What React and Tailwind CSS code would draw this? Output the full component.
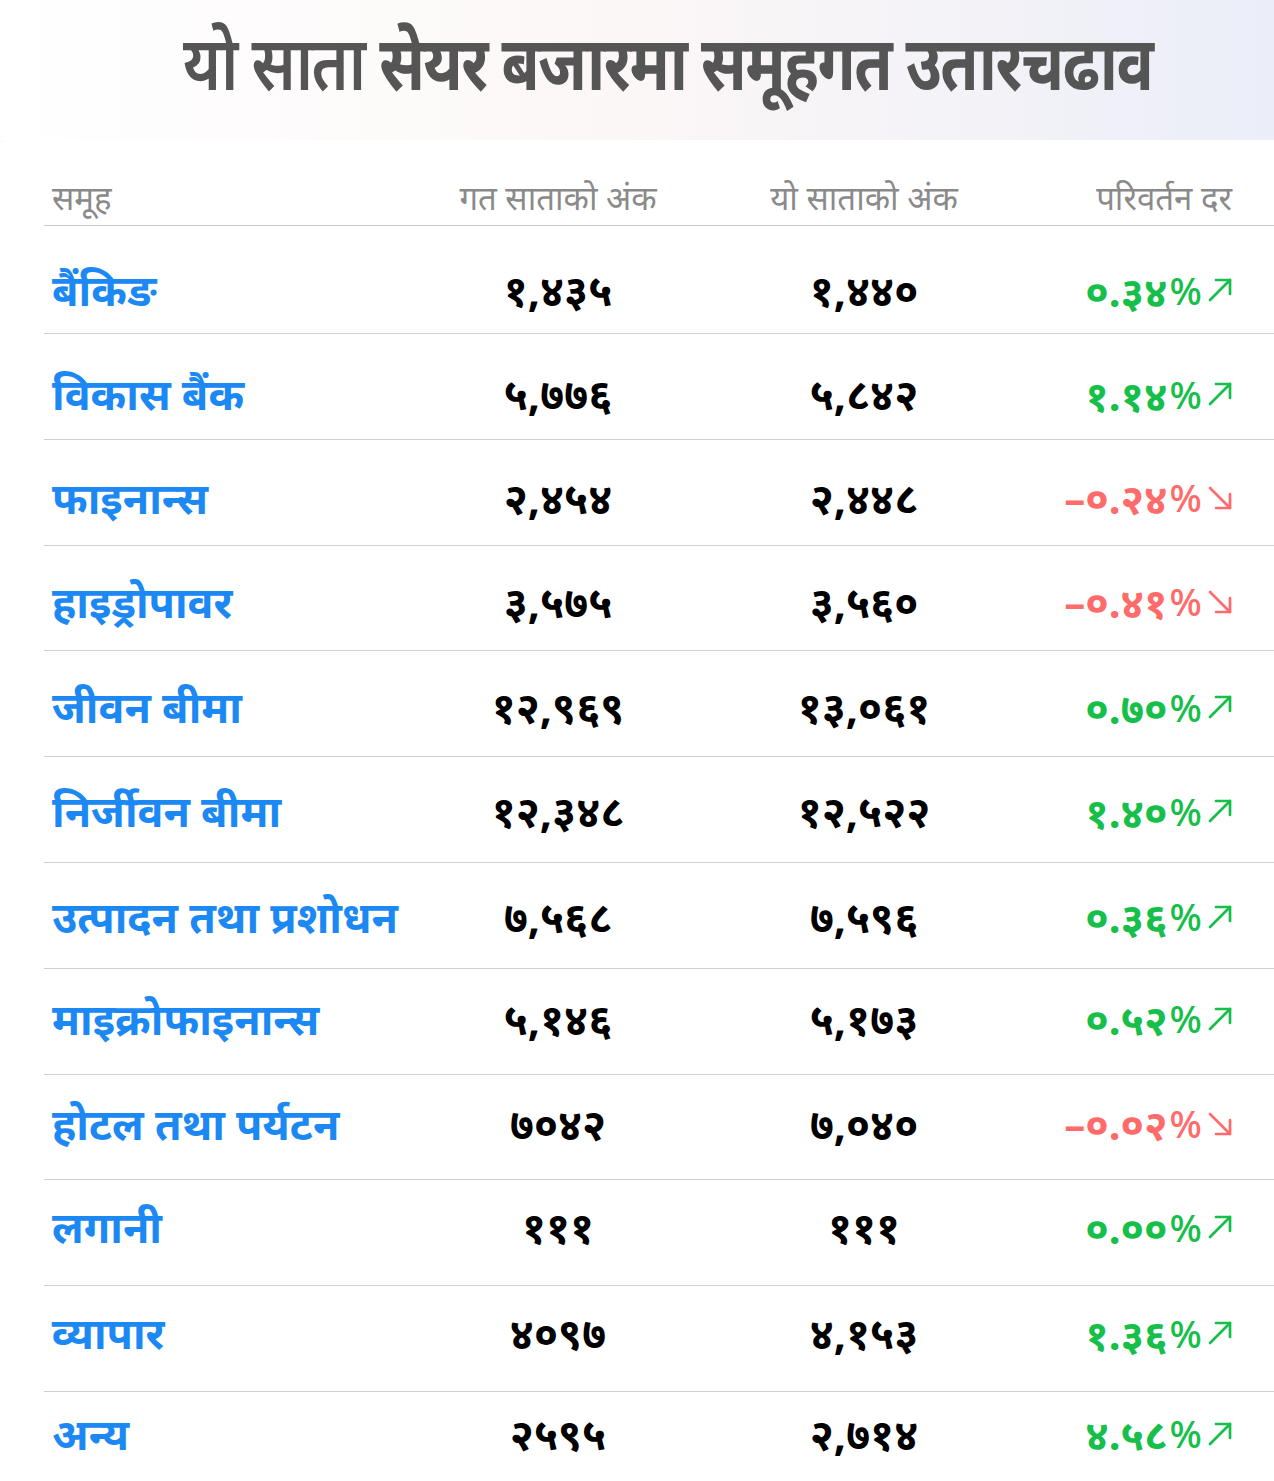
import React from "react";

const rows = [
  ["बैंकिङ", "१,४३५", "१,४४०", "०.३४", true],
  ["विकास बैंक", "५,७७६", "५,८४२", "१.१४", true],
  ["फाइनान्स", "२,४५४", "२,४४८", "–०.२४", false],
  ["हाइड्रोपावर", "३,५७५", "३,५६०", "–०.४१", false],
  ["जीवन बीमा", "१२,९६९", "१३,०६१", "०.७०", true],
  ["निर्जीवन बीमा", "१२,३४८", "१२,५२२", "१.४०", true],
  ["उत्पादन तथा प्रशोधन", "७,५६८", "७,५९६", "०.३६", true],
  ["माइक्रोफाइनान्स", "५,१४६", "५,१७३", "०.५२", true],
  ["होटल तथा पर्यटन", "७०४२", "७,०४०", "–०.०२", false],
  ["लगानी", "१११", "१११", "०.००", true],
  ["व्यापार", "४०९७", "४,१५३", "१.३६", true],
  ["अन्य", "२५९५", "२,७१४", "४.५८", true],
];

const pads = [
  "pt-[31px]",
  "pt-[27px]",
  "pt-[25px]",
  "pt-[23px]",
  "pt-[23px]",
  "pt-[21px]",
  "pt-[21px]",
  "pt-[17px]",
  "pt-[16px]",
  "pt-[14px]",
  "pt-[14px]",
  "pt-[9px]",
];

function Arrow({ up }) {
  return up ? (
    <svg width="24" height="24" viewBox="0 0 24 24" fill="none" stroke="currentColor" strokeWidth="2.7" strokeLinecap="round" strokeLinejoin="round" className="ml-[6px]">
      <path d="M2 22L22 2" />
      <path d="M8 2h14v14" />
    </svg>
  ) : (
    <svg width="24" height="24" viewBox="0 0 24 24" fill="none" stroke="currentColor" strokeWidth="2.7" strokeLinecap="round" strokeLinejoin="round" className="ml-[6px]">
      <path d="M2 2l20 20" />
      <path d="M22 8v14H8" />
    </svg>
  );
}

export default function App() {
  return (
    <div className="w-[1274px] h-[1481px] overflow-hidden bg-white" style={{ fontFamily: '"Noto Sans", sans-serif' }}>
      <div className="h-[140px] pb-[18px] pl-[62px] flex items-center justify-center bg-gradient-to-r from-white via-[#fcf7f7] to-[#ebeef8] shadow-[0_4px_8px_rgba(0,0,0,0.04)]">
        <h1 className="text-[76px] font-bold text-[#555555] leading-none tracking-tight whitespace-nowrap scale-x-[0.815]">
          <span className="font-semibold">यो साता</span> सेयर बजारमा समूहगत उतारचढाव
        </h1>
      </div>
      <div className="bg-white rounded-tl-md pl-[44px] pt-[30px]">
        <div className="grid grid-cols-[361px_306px_306px_257px] border-b border-[#c8c8c8] h-[56px] items-center text-[33px] text-[#8a8a8a]">
          <div className="pl-2">समूह</div>
          <div className="text-center">गत साताको अंक</div>
          <div className="text-center">यो साताको अंक</div>
          <div className="text-right pr-[42px]">परिवर्तन दर</div>
        </div>
        {rows.map(([name, a, b, c, up], i) => (
          <div
            key={i}
            className={`grid grid-cols-[361px_306px_306px_257px] border-b border-[#d0d0d0] items-start ${pads[i]} ${i === 0 ? "h-[108px]" : "h-[105.8px]"}`}
          >
            <div className="pl-2 text-[43px] leading-[66px] font-bold text-[#1c88f4] whitespace-nowrap">{name}</div>
            <div className="text-center text-[43px] leading-[66px] font-bold text-black">{a}</div>
            <div className="text-center text-[43px] leading-[66px] font-bold text-black">{b}</div>
            <div className={`h-[66px] pr-[42px] flex items-center justify-end ${up ? "text-[#16bf4a]" : "text-[#ff6b6b]"}`}>
              <span className="text-[42px] font-bold">{c}</span>
              <span className="text-[38px] font-medium ml-[2px]">%</span>
              <Arrow up={up} />
            </div>
          </div>
        ))}
      </div>
    </div>
  );
}
